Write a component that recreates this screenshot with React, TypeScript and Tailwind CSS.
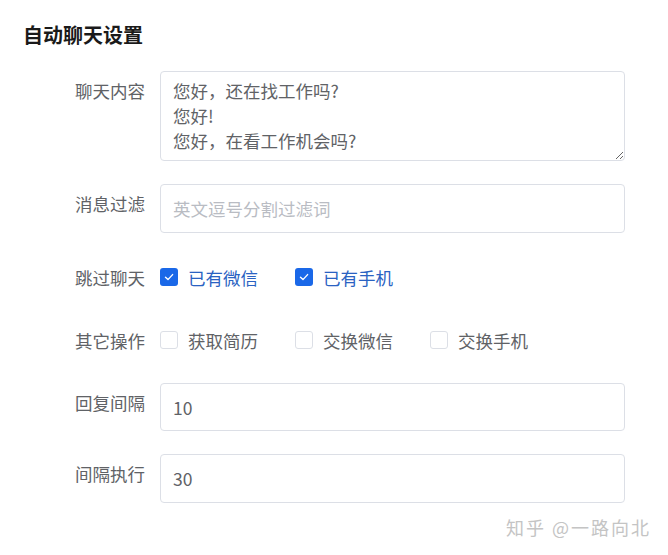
import React from "react";

const font = { fontFamily: '"Noto Sans CJK SC", "Noto Sans", sans-serif' };

function Check({ checked, label }: { checked: boolean; label: string }) {
  return (
    <div className="flex items-center w-[135px] shrink-0">
      {checked ? (
        <span className="w-[18px] h-[18px] rounded-[3px] bg-[#1a68e8] flex items-center justify-center">
          <svg width="12" height="12" viewBox="0 0 12 12" fill="none">
            <path d="M2.5 6.2 L5 8.6 L9.6 3.6" stroke="white" strokeWidth="1.4" strokeLinecap="round" strokeLinejoin="round" />
          </svg>
        </span>
      ) : (
        <span className="w-[18px] h-[18px] rounded-[3px] border border-[#dcdfe6] bg-white box-border" />
      )}
      <span className={`ml-[10px] text-[17.5px] leading-[25px] ${checked ? "text-[#2a62c2]" : "text-[#606266]"}`}>{label}</span>
    </div>
  );
}

function Label({ children, pt = "pt-[8px]" }: { children: React.ReactNode; pt?: string }) {
  return (
    <div className={`w-[145px] shrink-0 text-right text-[17.5px] leading-[25px] text-[#606266] ${pt}`}>{children}</div>
  );
}

export default function App() {
  return (
    <div className="relative w-[668px] h-[555px] bg-white overflow-hidden" style={font}>
      <div className="pl-[23px] pt-[23px] text-[20px] leading-[24px] font-bold text-[#1a1a1a]">自动聊天设置</div>

      <div className="flex mt-[24px]">
        <Label pt="pt-[7px]">聊天内容</Label>
        <textarea
          className="ml-[15px] w-[465px] h-[90px] border border-[#dcdfe6] rounded-[4px] px-[12px] pt-[6px] text-[17.5px] leading-[25px] text-[#606266] resize-y outline-none overflow-hidden"
          defaultValue={"您好，还在找工作吗?\n您好!\n您好，在看工作机会吗?"}
        />
      </div>

      <div className="flex mt-[23px]">
        <Label pt="pt-[7px]">消息过滤</Label>
        <input
          className="ml-[15px] w-[465px] h-[49px] border border-[#dcdfe6] rounded-[4px] px-[12px] text-[17.5px] text-[#606266] placeholder:text-[#b9bcc3] outline-none"
          placeholder="英文逗号分割过滤词"
        />
      </div>

      <div className="flex items-center mt-[29px] h-[30px]">
        <Label pt="pt-0">跳过聊天</Label>
        <div className="ml-[15px] flex items-center">
          <Check checked label="已有微信" />
          <Check checked label="已有手机" />
        </div>
      </div>

      <div className="flex items-center mt-[33px] h-[30px]">
        <Label pt="pt-0">其它操作</Label>
        <div className="ml-[15px] flex items-center">
          <Check checked={false} label="获取简历" />
          <Check checked={false} label="交换微信" />
          <Check checked={false} label="交换手机" />
        </div>
      </div>

      <div className="flex mt-[28px]">
        <Label pt="pt-[7px]">回复间隔</Label>
        <input
          className="ml-[15px] w-[465px] h-[48px] border border-[#dcdfe6] rounded-[4px] px-[12px] text-[17.5px] text-[#606266] outline-none"
          defaultValue="10"
        />
      </div>

      <div className="flex mt-[23px]">
        <Label pt="pt-[7px]">间隔执行</Label>
        <input
          className="ml-[15px] w-[465px] h-[49px] border border-[#dcdfe6] rounded-[4px] px-[12px] text-[17.5px] text-[#606266] outline-none"
          defaultValue="30"
        />
      </div>

      <div className="absolute right-[17px] top-[513px] text-[18px] leading-[28px] text-[#c4c4c4] tracking-[2px]">
        知乎 @一路向北
      </div>
    </div>
  );
}
